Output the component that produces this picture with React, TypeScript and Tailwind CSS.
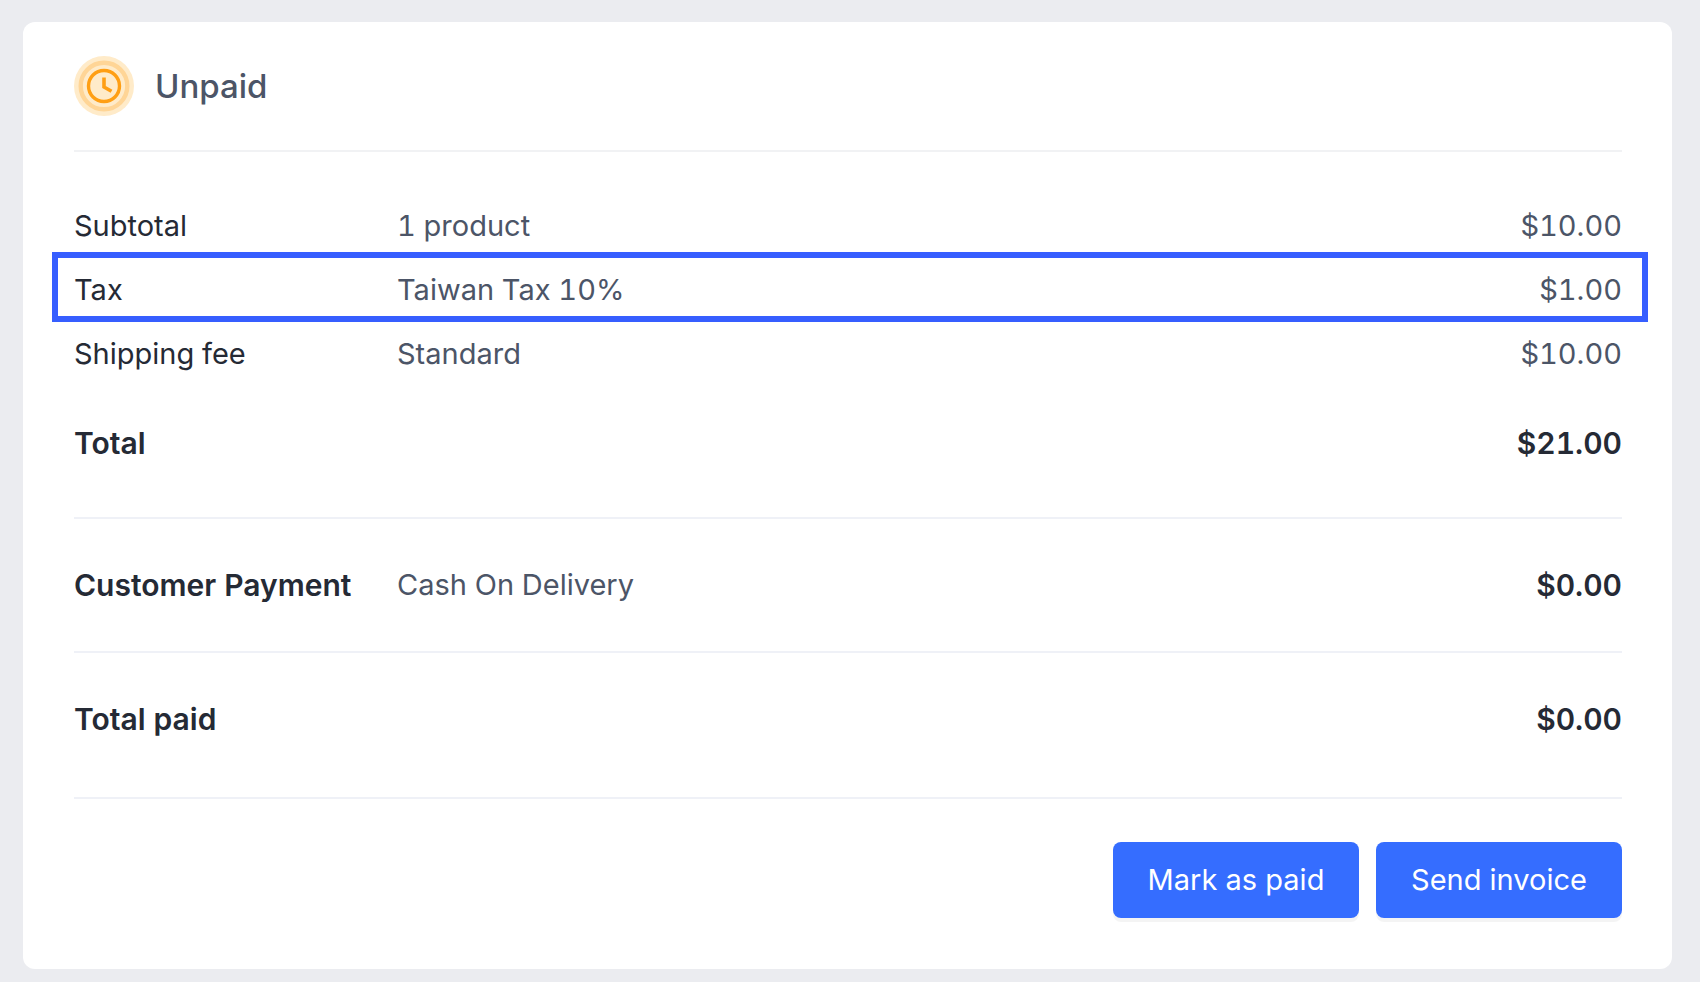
import type { ReactNode } from 'react'

interface SummaryRow {
  label: string
  detail?: string
  amount: string
  strong?: boolean
  highlighted?: boolean
}

const charges: SummaryRow[] = [
  { label: 'Subtotal', detail: '1 product', amount: '$10.00' },
  { label: 'Tax', detail: 'Taiwan Tax 10%', amount: '$1.00', highlighted: true },
  { label: 'Shipping fee', detail: 'Standard', amount: '$10.00' },
]

function ClockBadge() {
  return (
    <svg viewBox="0 0 60 60" className="size-[60px] shrink-0" fill="none" aria-hidden="true">
      <circle cx="30" cy="30" r="30" fill="#ffebc9" />
      <circle cx="30" cy="30" r="23.3" stroke="#ffd596" strokeWidth="4.4" />
      <circle cx="30" cy="30" r="15.5" stroke="#ff9f14" strokeWidth="3.4" />
      <path d="M30 21.5V31l7.5 4.3" stroke="#ff9f14" strokeWidth="3.6" />
    </svg>
  )
}

function Row({ label, detail, amount, strong, highlighted }: SummaryRow) {
  return (
    <tr className="relative">
      <th
        scope="row"
        className={`w-[323px] p-0 text-left text-[#252a35] ${strong ? 'text-[30px] font-semibold' : 'font-normal'}`}
      >
        {label}
      </th>
      <td className="p-0 text-[#4c5567]">{detail}</td>
      <td className={`p-0 text-right ${strong ? 'text-[30px] font-semibold text-[#252a35]' : 'text-[#4c5567]'}`}>
        {amount}
        {highlighted && (
          <span className="pointer-events-none absolute -top-[6px] -right-[26px] bottom-0 -left-[22px] border-[6px] border-[#365eff]" />
        )}
      </td>
    </tr>
  )
}

function Table({ children }: { children: ReactNode }) {
  return (
    <table className="w-full border-collapse leading-[64px] tabular-nums">
      <tbody>{children}</tbody>
    </table>
  )
}

function ActionButton({ children }: { children: ReactNode }) {
  return (
    <button
      type="button"
      className="h-[76px] w-[246px] rounded-lg bg-[#356dff] text-white shadow-[0_4px_0_rgba(0,0,0,0.045)]"
    >
      {children}
    </button>
  )
}

export default function App() {
  return (
    <main className="bg-[#ebecf0] pt-[22px] pr-7 pb-[13px] pl-[23px] font-['Inter',sans-serif] text-[29px]">
      <section className="rounded-xl bg-white pt-[34px] pr-[50px] pb-[51px] pl-[51px]">
        <header className="flex items-center gap-[21px] border-b-2 border-[#f1f2f4] pb-[34px]">
          <ClockBadge />
          <h1 className="text-[33px] leading-[50px] font-medium text-[#4c5567]">Unpaid</h1>
        </header>

        <div className="border-b-2 border-[#eff1f7] pt-[42px] pb-[42px]">
          <Table>
            {charges.map((row) => (
              <Row key={row.label} {...row} />
            ))}
          </Table>
          <div className="pt-[25px]">
            <Table>
              <Row label="Total" amount="$21.00" strong />
            </Table>
          </div>
        </div>

        <div className="border-b-2 border-[#eff1f7] py-[34px]">
          <Table>
            <Row label="Customer Payment" detail="Cash On Delivery" amount="$0.00" strong />
          </Table>
        </div>

        <div className="border-b-2 border-[#eff1f7] pt-[34px] pb-[46px]">
          <Table>
            <Row label="Total paid" amount="$0.00" strong />
          </Table>
        </div>

        <div className="flex justify-end gap-[17px] pt-[43px]">
          <ActionButton>Mark as paid</ActionButton>
          <ActionButton>Send invoice</ActionButton>
        </div>
      </section>
    </main>
  )
}
